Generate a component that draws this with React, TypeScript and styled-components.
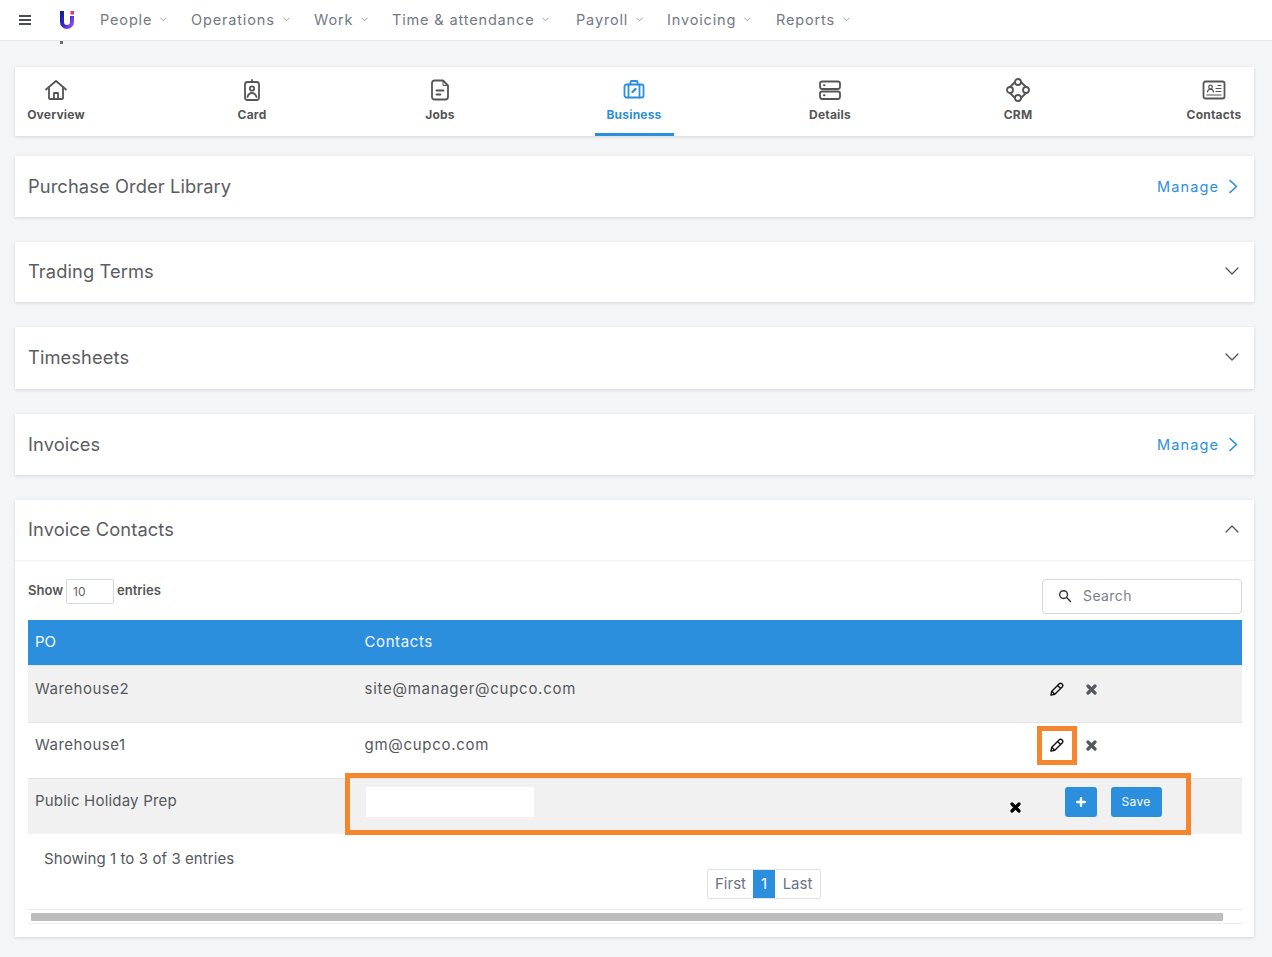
import React from "react";
import styled, { createGlobalStyle } from "styled-components";

const Global = createGlobalStyle`
  html, body { margin: 0; padding: 0; height: 957px; overflow: hidden; background: #f4f5f7; }
  body { font-family: Inter, "Open Sans", "Liberation Sans", sans-serif; color: #525558; }
  *, *::before, *::after { box-sizing: border-box; }
`;

const Page = styled.div`
  position: relative;
  width: 1272px;
  height: 957px;
  overflow: hidden;
  display: flex;
  flex-direction: column;
`;

const TopBar = styled.header`
  height: 41px;
  flex: none;
  background: #fff;
  border-bottom: 1px solid #e6e8ec;
  display: flex;
  align-items: center;
  padding-left: 19px;
`;

const ClippedTitleTick = styled.span`
  position: absolute;
  left: 60px;
  top: 41px;
  width: 3px;
  height: 3px;
  background: #6a6d72;
`;

const Burger = styled.span`
  width: 12px;
  height: 10px;
  border-top: 2px solid #4a4d52;
  border-bottom: 2px solid #4a4d52;
  position: relative;
  margin-right: 29px;
  &::after {
    content: "";
    position: absolute;
    left: 0;
    right: 0;
    top: 2px;
    height: 2px;
    background: #4a4d52;
  }
`;

const NavItem = styled.div<{ $w: number }>`
  display: flex;
  align-items: center;
  flex: none;
  width: ${(p) => p.$w}px;
  margin-top: -2px;
  font-size: 14.5px;
  letter-spacing: 0.85px;
  color: #727a84;
  gap: 8px;
  white-space: nowrap;
`;

const Main = styled.main`
  flex: 1;
  padding: 26px 18px 0 15px;
  display: flex;
  flex-direction: column;
`;

const Card = styled.section<{ $mb?: number }>`
  background: #fff;
  box-shadow: 0 1px 3px rgba(40, 50, 70, 0.16);
  margin-bottom: ${(p) => p.$mb ?? 0}px;
`;

const TabsCard = styled(Card)`
  height: 69px;
  display: flex;
  justify-content: space-between;
  padding: 0 5.5px 0 8.5px;
`;

const Tab = styled.div<{ $active?: boolean; $w: number }>`
  width: ${(p) => p.$w}px;
  height: 69px;
  display: flex;
  flex-direction: column;
  align-items: center;
  padding-top: 11px;
  color: ${(p) => (p.$active ? "#2b8fde" : "#555")};
  font-size: 12px;
  letter-spacing: 0.2px;
  font-weight: 700;
  white-space: nowrap;
  border-bottom: 3px solid ${(p) => (p.$active ? "#2b8fde" : "transparent")};
  svg { margin-bottom: 5px; }
`;

const PanelHead = styled.div<{ $h: number; $border?: boolean }>`
  height: ${(p) => p.$h}px;
  display: flex;
  align-items: center;
  justify-content: space-between;
  padding: 0 15px 2px 13px;
  border-bottom: ${(p) => (p.$border ? "1px solid #f1f2f4" : "none")};
`;

const PanelTitle = styled.h3`
  margin: 0;
  font-size: 18.3px;
  font-weight: 400;
  color: #5a5d62;
  letter-spacing: 0.1px;
`;

const Manage = styled.a`
  display: flex;
  align-items: center;
  gap: 9px;
  margin: 2px 1px 0 0;
  color: #2b8fde;
  font-size: 14.5px;
  letter-spacing: 1.1px;
`;

const Controls = styled.div`
  display: flex;
  justify-content: space-between;
  padding: 18px 12px 0 13px;
  height: 59px;
`;

const ShowWrap = styled.div`
  display: flex;
  align-items: flex-start;
  gap: 3px;
  font-size: 13px;
  font-weight: 600;
  color: #555;
  line-height: 22px;
`;

const ShowBox = styled.span`
  width: 48px;
  height: 25px;
  border: 1px solid #d5d8dc;
  border-radius: 2px;
  font-size: 12px;
  font-weight: 400;
  padding-left: 6px;
  color: #666;
  line-height: 23px;
`;

const SearchBox = styled.div`
  width: 200px;
  height: 35px;
  border: 1px solid #d5d8dc;
  border-radius: 4px;
  display: flex;
  align-items: center;
  gap: 11px;
  padding: 0 0 2px 15px;
  font-size: 14px;
  letter-spacing: 0.4px;
  color: #7a7f87;
`;

const Table = styled.div`
  margin: 0 12px 0 13px;
`;

const HeadRow = styled.div`
  height: 46px;
  background: #2b8fde;
  border-bottom: 1px solid #e1e8ee;
  color: #f3f9fe;
  display: grid;
  grid-template-columns: 329.5px 1fr;
  align-items: center;
  padding: 0 0 3px 7px;
  font-size: 15px;
`;

const Cell = styled.span<{ $ls: number }>`
  letter-spacing: ${(p) => p.$ls}px;
`;

const Row = styled.div<{ $h: number; $pt: number; $shade?: boolean; $line?: boolean }>`
  height: ${(p) => p.$h}px;
  background: ${(p) => (p.$shade ? "#f1f1f2" : "#fff")};
  border-bottom: ${(p) => (p.$line ? "1px solid #e3e4ea" : "none")};
  display: grid;
  grid-template-columns: 329.5px 1fr;
  padding: ${(p) => p.$pt}px 0 0 7px;
  font-size: 15px;
  line-height: 20px;
  color: #55585c;
`;

const RowEnd = styled.div`
  display: flex;
  justify-content: space-between;
  align-items: flex-start;
  padding-right: 144px;
`;

const Icons = styled.div`
  display: flex;
  align-items: center;
  gap: 20px;
  padding-top: 3px;
`;

const IconFrame = styled.span<{ $on?: boolean }>`
  width: 14px;
  height: 14px;
  display: flex;
  align-items: center;
  justify-content: center;
  position: relative;
  &::before {
    content: ${(p) => (p.$on ? '""' : "none")};
    position: absolute;
    left: -13px;
    top: -12px;
    width: 40px;
    height: 39px;
    border: 5px solid #f5862e;
  }
`;

const EditRow = styled(Row)`
  position: relative;
`;

const Highlight = styled.div`
  position: absolute;
  left: 317px;
  top: -6px;
  width: 846px;
  height: 62px;
  border: 5px solid #f5862e;
  pointer-events: none;
`;

const EditCell = styled.div`
  display: flex;
  align-items: flex-start;
  margin-top: -4px;
`;

const BlankInput = styled.div`
  width: 168px;
  height: 30px;
  background: #fff;
  margin-left: 1px;
`;

const CrossSlot = styled.span`
  margin-left: 476px;
  margin-top: 15px;
  display: flex;
`;

const BlueBtn = styled.span<{ $w: number; $ml: number }>`
  width: ${(p) => p.$w}px;
  height: 30px;
  margin-left: ${(p) => p.$ml}px;
  background: #2b8fde;
  color: #fff;
  border-radius: 3px;
  font-size: 12px;
  letter-spacing: 0.3px;
  display: flex;
  align-items: center;
  justify-content: center;
`;

const Foot = styled.div`
  font-size: 15px;
  letter-spacing: 0.08px;
  color: #55585c;
  padding: 15px 0 0 29px;
  height: 35px;
  line-height: 20px;
`;

const Pager = styled.div`
  display: flex;
  width: 114px;
  height: 30px;
  margin: 0 0 0 692px;
  border: 1px solid #e0e2e8;
  border-radius: 2px;
  font-size: 15px;
  color: #6b7280;
`;

const PageBtn = styled.span<{ $on?: boolean; $w: number }>`
  width: ${(p) => p.$w}px;
  background: ${(p) => (p.$on ? "#2b8fde" : "#fff")};
  color: ${(p) => (p.$on ? "#fff" : "#6b7280")};
  display: flex;
  align-items: center;
  justify-content: center;
  padding-bottom: 2px;
`;

const ScrollTrack = styled.div`
  margin: 10px 12px 13px 13px;
  height: 15px;
  border-top: 1px solid #e9e9ea;
  border-bottom: 1px solid #eeeeef;
  padding: 3px 19px 0 3px;
`;

const ScrollThumb = styled.div`
  height: 8px;
  background: #bdbdbd;
  border-radius: 1px;
`;

const Chevron = ({ up }: { up?: boolean }) => (
  <svg width="14" height="8" viewBox="0 0 14 8" fill="none" stroke="#4f5357" strokeWidth="1.3" strokeLinecap="round" strokeLinejoin="round">
    <path d={up ? "M1 7l6-6 6 6" : "M1 1l6 6 6-6"} />
  </svg>
);

const NavCaret = () => (
  <svg width="7" height="5" viewBox="0 0 7 5" fill="none" stroke="#9aa0a8" strokeWidth="1" strokeLinecap="round" strokeLinejoin="round">
    <path d="M.7 1l2.8 2.8L6.3 1" />
  </svg>
);

const Right = () => (
  <svg width="10" height="15" viewBox="0 0 10 15" fill="none" stroke="#2b8fde" strokeWidth="1.7" strokeLinecap="round" strokeLinejoin="round">
    <path d="M2 1.500l6.500 6-6.500 6" />
  </svg>
);

const Pencil = () => (
  <svg width="14" height="14" viewBox="0 0 14 14" fill="none" stroke="#111" strokeWidth="1.4" strokeLinejoin="round" style={{ flex: "none" }}>
    <path d="M.9 13.100l.9-3.900L9 2c.9-.9 2.200-.9 3.100 0 .9.900.9 2.100 0 3L4.800 12.200z" />
    <path d="M7.600 3.400l3.100 3.100M1.800 9.200l3 3" />
  </svg>
);

const Cross = ({ color }: { color: string }) => (
  <svg width="11" height="11" viewBox="0 0 11 11" stroke={color} strokeWidth="3.200" strokeLinecap="round">
    <path d="M2 2l7 7M9 2l-7 7" />
  </svg>
);

const Logo = () => (
  <svg width="14" height="18" viewBox="0 0 14 18" fill="none" style={{ marginRight: 26, flex: "none" }}>
    <defs>
      <linearGradient id="lg" x1="0" y1="0" x2="1" y2="1">
        <stop offset="0" stopColor="#141c8c" />
        <stop offset="0.55" stopColor="#3b2bd0" />
        <stop offset="1" stopColor="#9b4df0" />
      </linearGradient>
    </defs>
    <path d="M2 0v11a5 5 0 0 0 10 0V5" stroke="url(#lg)" strokeWidth="4" />
    <rect x="10.500" y="0" width="3.500" height="3.500" fill="#ec2f88" />
  </svg>
);

const ic = { width: 24, height: 24, viewBox: "0 0 24 24", fill: "none", strokeWidth: 1.8, strokeLinecap: "round", strokeLinejoin: "round" } as const;

const HomeIcon = ({ c }: { c: string }) => (
  <svg {...ic} stroke={c}>
    <path d="M2 11.500L12 3l10 8.500" />
    <path d="M5 9.500V20a1 1 0 0 0 1 1h12a1 1 0 0 0 1-1V9.500" />
    <path d="M10 21v-6h4v6" />
  </svg>
);
const BadgeIcon = ({ c }: { c: string }) => (
  <svg {...ic} stroke={c}>
    <rect x="5" y="4" width="14" height="18" rx="2.500" />
    <path d="M12 2v2" />
    <circle cx="12" cy="10.500" r="2.200" />
    <path d="M7.500 19c.8-2.800 2.400-4 4.500-4s3.700 1.200 4.500 4" />
  </svg>
);
const DocIcon = ({ c }: { c: string }) => (
  <svg {...ic} stroke={c}>
    <path d="M6.500 2.500H15l5 5V19a2.500 2.500 0 0 1-2.500 2.500h-11A2.500 2.500 0 0 1 4 19V5a2.500 2.500 0 0 1 2.500-2.500z" />
    <path d="M15 2.500V7.500h5" strokeWidth="1" />
    <path d="M8.500 12.500h7M8.500 16.500h4" />
  </svg>
);
const CaseIcon = ({ c }: { c: string }) => (
  <svg {...ic} stroke={c}>
    <rect x="2.500" y="6.500" width="19" height="13" rx="2" />
    <path d="M8.500 6.500V4a1 1 0 0 1 1-1h5a1 1 0 0 1 1 1v2.500" />
    <path d="M6.500 6.500v13M17.500 6.500v13" />
    <path d="M10.500 14l3-3" strokeWidth="2.400" />
  </svg>
);
const ServerIcon = ({ c }: { c: string }) => (
  <svg {...ic} stroke={c}>
    <rect x="2" y="3.500" width="20" height="7.500" rx="2.200" />
    <rect x="2" y="13.500" width="20" height="7.500" rx="2.200" />
    <path d="M6 7.250h.5M6 17.250h.5" strokeWidth="2" />
  </svg>
);
const CrmIcon = ({ c }: { c: string }) => (
  <svg {...ic} stroke={c}>
    <circle cx="12" cy="4" r="3" />
    <circle cx="12" cy="20" r="3" />
    <circle cx="4" cy="12" r="3" />
    <circle cx="20" cy="12" r="3" />
    <path d="M4 9l5-5M15 4l5 5M20 15l-5 5M9 20l-5-5" />
  </svg>
);
const ContactIcon = ({ c }: { c: string }) => (
  <svg {...ic} stroke={c}>
    <rect x="1.500" y="3.500" width="21" height="17" rx="2" />
    <circle cx="8.500" cy="9" r="1.800" strokeWidth="1.200" />
    <path d="M5.500 14c.4-1.800 1.500-2.800 3-2.800s2.600 1 3 2.800M14 10.500h5M16 7.500h3M14 13.500h5M5 17h14" strokeWidth="1.200" />
  </svg>
);
const SearchIcon = () => (
  <svg width="14" height="14" viewBox="0 0 14 14" fill="none" stroke="#333" strokeWidth="1.400" strokeLinecap="round">
    <circle cx="5.600" cy="5.600" r="3.900" />
    <path d="M8.600 8.600L12.500 12.500" />
  </svg>
);
const PlusIcon = () => (
  <svg width="10" height="10" viewBox="0 0 10 10" stroke="#fff" strokeWidth="2.400" strokeLinecap="round">
    <path d="M5 1.200v7.600M1.200 5h7.600" />
  </svg>
);

const navs: [string, number][] = [
  ["People", 91],
  ["Operations", 123],
  ["Work", 78],
  ["Time & attendance", 184],
  ["Payroll", 91],
  ["Invoicing", 109],
  ["Reports", 100],
];

const tabs: { label: string; w: number; I: React.FC<{ c: string }>; active?: boolean }[] = [
  { label: "Overview", w: 65, I: HomeIcon },
  { label: "Card", w: 67, I: BadgeIcon },
  { label: "Jobs", w: 49, I: DocIcon },
  { label: "Business", w: 79, I: CaseIcon, active: true },
  { label: "Details", w: 53, I: ServerIcon },
  { label: "CRM", w: 63, I: CrmIcon },
  { label: "Contacts", w: 69, I: ContactIcon },
];

const Actions = ({ on }: { on?: boolean }) => (
  <Icons>
    <IconFrame $on={on}>
      <Pencil />
    </IconFrame>
    <IconFrame>
      <Cross color="#55585c" />
    </IconFrame>
  </Icons>
);

export default function App() {
  return (
    <Page>
      <Global />
      <TopBar>
        <Burger />
        <Logo />
        {navs.map(([n, w]) => (
          <NavItem key={n} $w={w}>
            {n}
            <NavCaret />
          </NavItem>
        ))}
      </TopBar>
      <ClippedTitleTick />
      <Main>
        <TabsCard $mb={20}>
          {tabs.map(({ label, w, I, active }) => (
            <Tab key={label} $w={w} $active={active}>
              <I c={active ? "#2b8fde" : "#555"} />
              {label}
            </Tab>
          ))}
        </TabsCard>
        <Card $mb={25}>
          <PanelHead $h={61}>
            <PanelTitle>Purchase Order Library</PanelTitle>
            <Manage>
              Manage <Right />
            </Manage>
          </PanelHead>
        </Card>
        <Card $mb={25}>
          <PanelHead $h={60}>
            <PanelTitle>Trading Terms</PanelTitle>
            <Chevron />
          </PanelHead>
        </Card>
        <Card $mb={25}>
          <PanelHead $h={62}>
            <PanelTitle>Timesheets</PanelTitle>
            <Chevron />
          </PanelHead>
        </Card>
        <Card $mb={25}>
          <PanelHead $h={61}>
            <PanelTitle>Invoices</PanelTitle>
            <Manage>
              Manage <Right />
            </Manage>
          </PanelHead>
        </Card>
        <Card>
          <PanelHead $h={61} $border>
            <PanelTitle>Invoice Contacts</PanelTitle>
            <Chevron up />
          </PanelHead>
          <Controls>
            <ShowWrap>
              Show <ShowBox>10</ShowBox> entries
            </ShowWrap>
            <SearchBox>
              <SearchIcon />
              Search
            </SearchBox>
          </Controls>
          <Table>
            <HeadRow>
              <Cell $ls={0}>PO</Cell>
              <Cell $ls={0.6}>Contacts</Cell>
            </HeadRow>
            <Row $h={57} $pt={13} $shade $line>
              <Cell $ls={0.5}>Warehouse2</Cell>
              <RowEnd>
                <Cell $ls={0.72}>site@manager@cupco.com</Cell>
                <Actions />
              </RowEnd>
            </Row>
            <Row $h={56} $pt={12} $line>
              <Cell $ls={0.5}>Warehouse1</Cell>
              <RowEnd>
                <Cell $ls={0.72}>gm@cupco.com</Cell>
                <Actions on />
              </RowEnd>
            </Row>
            <EditRow $h={55} $pt={12} $shade>
              <Highlight />
              <Cell $ls={0.2}>Public Holiday Prep</Cell>
              <EditCell>
                <BlankInput />
                <CrossSlot>
                  <Cross color="#000" />
                </CrossSlot>
                <BlueBtn $w={32} $ml={44}>
                  <PlusIcon />
                </BlueBtn>
                <BlueBtn $w={51} $ml={14}>
                  Save
                </BlueBtn>
              </EditCell>
            </EditRow>
          </Table>
          <Foot>Showing 1 to 3 of 3 entries</Foot>
          <Pager>
            <PageBtn $w={45}>First</PageBtn>
            <PageBtn $w={22} $on>
              1
            </PageBtn>
            <PageBtn $w={45}>Last</PageBtn>
          </Pager>
          <ScrollTrack>
            <ScrollThumb />
          </ScrollTrack>
        </Card>
      </Main>
    </Page>
  );
}
